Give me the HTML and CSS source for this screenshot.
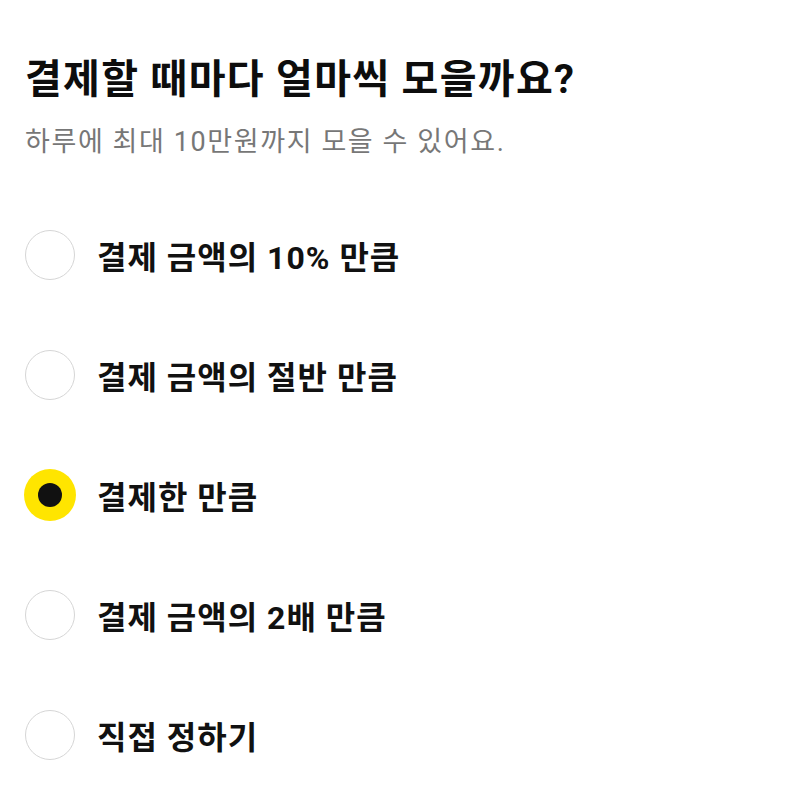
FILE: index.html
```html
<!DOCTYPE html>
<html lang="ko">
<head>
<meta charset="utf-8">
<link rel="stylesheet" href="styles.css">
</head>
<body>
<main class="page">
  <h1 class="title">결제할 때마다 얼마씩 모을까요?</h1>
  <p class="subtitle">하루에 최대 10만원까지 모을 수 있어요.</p>
  <ul class="options">
    <li class="option"><span class="radio"></span><span class="label">결제 금액의 10% 만큼</span></li>
    <li class="option"><span class="radio"></span><span class="label">결제 금액의 절반 만큼</span></li>
    <li class="option selected"><span class="radio"></span><span class="label">결제한 만큼</span></li>
    <li class="option"><span class="radio"></span><span class="label">결제 금액의 2배 만큼</span></li>
    <li class="option"><span class="radio"></span><span class="label">직접 정하기</span></li>
  </ul>
</main>
</body>
</html>
```

FILE: styles.css
```css
html, body {
  margin: 0;
  padding: 0;
  background: #ffffff;
}
body {
  font-family: Roboto, "Noto Sans CJK KR", sans-serif;
  color: #111111;
}
.page {
  padding: 56px 25px 0 25px;
}
.title {
  margin: 0;
  font-size: 40px;
  line-height: 48px;
  font-weight: 700;
  letter-spacing: 1.3px;
  color: #0d0d0d;
}
.subtitle {
  margin: 22px 0 0 0;
  font-size: 27px;
  line-height: 32px;
  letter-spacing: 1.6px;
  color: #777777;
}
.options {
  list-style: none;
  margin: 72px 0 0 0;
  padding: 0;
  display: flex;
  flex-direction: column;
  gap: 70px;
}
.option {
  display: flex;
  align-items: center;
  gap: 22px;
  height: 50px;
}
.radio {
  box-sizing: border-box;
  width: 50px;
  height: 50px;
  border-radius: 50%;
  border: 1.5px solid #d6d6d6;
  flex: none;
  display: flex;
  align-items: center;
  justify-content: center;
}
.selected .radio {
  border: none;
  width: 52px;
  height: 52px;
  margin: 0 -1px;
  background: #ffe500;
}
.selected .radio::after {
  content: "";
  width: 24px;
  height: 24px;
  border-radius: 50%;
  background: #111111;
}
.label {
  font-size: 32px;
  font-weight: 700;
  letter-spacing: 1px;
  color: #111111;
}
```
